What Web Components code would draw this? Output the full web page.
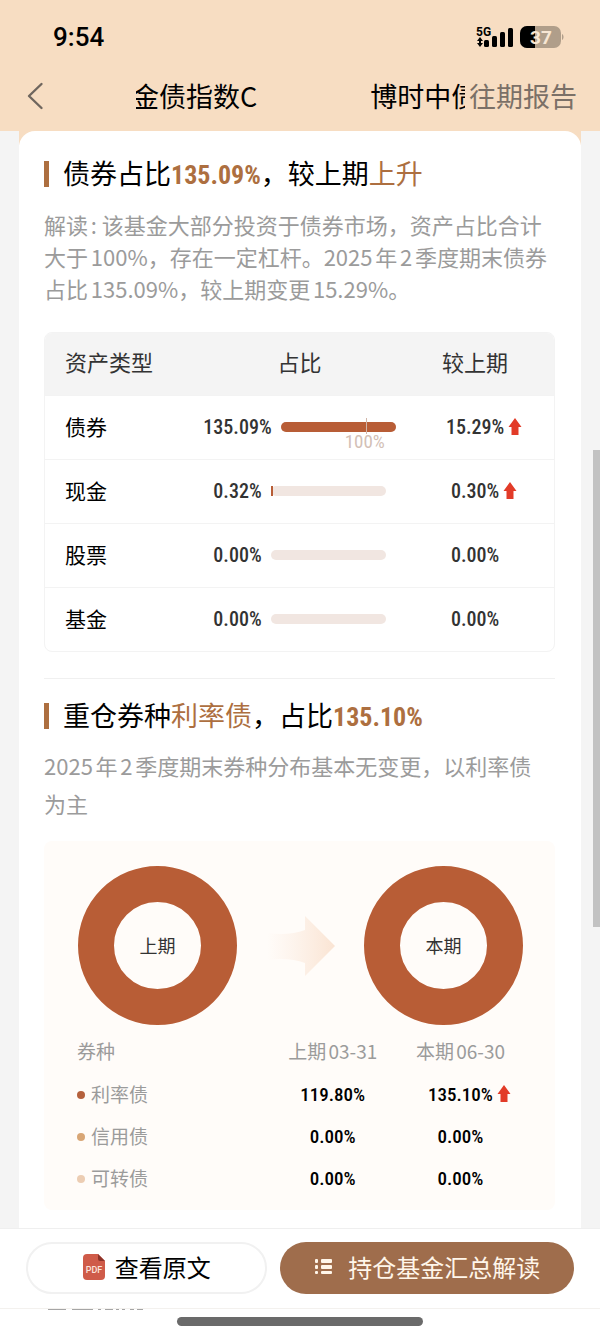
<!DOCTYPE html>
<html lang="zh-CN">
<head>
<meta charset="utf-8">
<meta name="viewport" content="width=device-width, initial-scale=1">
<title>基金报告解读</title>
<style>
:root {
  --peach: #f7ddc2;
  --accent: #ad6f40;
  --fill: #b85d36;
  --muted: #9b9b9b;
  --num: "Roboto Condensed", "Liberation Sans Narrow", Roboto, sans-serif;
}
body {
  margin: 0;
  background: #f4f4f4;
  color: #000;
  font-family: "Noto Sans CJK SC", sans-serif;
}
</style>
</head>
<body>
<report-page>
  <status-bar slot="top" time="9:54" battery="37"></status-bar>
  <nav-bar slot="top">
    <span>金债指数C</span><span>博时中债</span>
    <a slot="action" href="#history">往期报告</a>
  </nav-bar>

  <section-heading>债券占比<b class="num">135.09%</b>，较上期<em>上升</em></section-heading>
  <section-text>解读: 该基金大部分投资于债券市场，资产占比合计大于100%，存在一定杠杆。2025年2季度期末债券占比135.09%，较上期变更15.29%。</section-text>
  <asset-table></asset-table>
  <section-rule></section-rule>
  <section-heading>重仓券种<em>利率债</em>，占比<b class="num">135.10%</b></section-heading>
  <section-text loose>2025年2季度期末券种分布基本无变更，以利率债<span style="white-space:nowrap">为主</span></section-text>
  <bond-panel></bond-panel>

  <bottom-bar slot="bottom"></bottom-bar>
</report-page>

<script>
const define = (name, html, setup) => {
  const template = document.createElement('template');
  template.innerHTML = html;
  customElements.define(name, class extends HTMLElement {
    constructor() {
      super();
      this.attachShadow({ mode: 'open' }).append(template.content.cloneNode(true));
    }
    connectedCallback() { if (setup) setup(this, this.shadowRoot); }
  });
};

define('report-page', `
<style>
  :host { display: flex; flex-direction: column; min-height: 100vh; position: relative; }
  header { background: var(--peach); padding-bottom: 5px; }
  main { flex: 1; margin: 0 19px; background: linear-gradient(var(--peach) 14px, #fff 14px); }
  article { background: #fff; border-radius: 16px 16px 0 0; padding: 26px 26px 16px 25px; }
  .thumb { position: absolute; right: 0; top: 450px; width: 7px; height: 477px; background: #c2c2c2; }
</style>
<header><slot name="top"></slot></header>
<main><article><slot></slot></article></main>
<slot name="bottom"></slot>
<div class="thumb"></div>`);

define('status-bar', `
<style>
  :host { display: flex; justify-content: space-between; align-items: center; height: 48px;
    padding: 13px 36px 0 53px; font: 500 26px/32px Roboto, sans-serif; }
  .icons { display: flex; align-items: center; gap: 6px; }
  svg { display: block; }
</style>
<time></time>
<div class="icons">
  <svg width="38" height="30" viewBox="0 -4 38 30" role="img" aria-label="5G">
    <text x="0" y="10" font-family="Roboto, sans-serif" font-weight="700" font-size="12">5G</text>
    <path d="M4 11l3 4H1zM4 21l3-4H1z"/><path d="M3 15h2v2H3z"/>
    <rect x="8" y="14" width="5" height="7" rx="1.500"/><rect x="16" y="10" width="5" height="11" rx="1.500"/>
    <rect x="24" y="6" width="5" height="15" rx="1.500"/><rect x="32" y="2" width="5" height="19" rx="1.500"/>
  </svg>
  <svg width="44" height="24" viewBox="0 0 44 24" role="img" aria-label="电量">
    <defs><clipPath id="level"><rect width="15" height="24"/></clipPath></defs>
    <rect y="1" width="41" height="22" rx="7" fill="#b09e8a"/>
    <rect y="1" width="41" height="22" rx="7" clip-path="url(#level)"/>
    <path d="M42 9c2 1 2 5 0 6z" fill="#b09e8a"/>
    <text class="pct" x="21" y="19" text-anchor="middle" fill="#f7e6d3" font-family="Roboto, sans-serif" font-weight="700" font-size="19"></text>
  </svg>
</div>`, (host, root) => {
  root.querySelector('time').textContent = host.getAttribute('time');
  root.querySelector('.pct').textContent = host.getAttribute('battery');
});

define('nav-bar', `
<style>
  :host { display: flex; align-items: center; height: 61px; padding: 4px 23px 0 26px; font-size: 27px; line-height: 40px; }
  button { flex: none; width: 20px; height: 30px; margin: 0 90px 0 0; padding: 0; border: 0; background: none; }
  svg { display: block; }
  .marquee { flex: 1; min-width: 0; overflow: hidden; white-space: nowrap; }
  .track { display: flex; gap: 113px; margin-left: -4px; }
  ::slotted(span) { flex: none; }
  ::slotted(a) { flex: none; margin-left: 4px; color: #7b7067; text-decoration: none; }
</style>
<button type="button" aria-label="返回"><svg width="20" height="30" viewBox="0 0 20 30" fill="none" stroke="#6f665e" stroke-width="2.400" stroke-linecap="round" stroke-linejoin="round"><path d="M15.500 3L3 15l12.500 12"/></svg></button>
<div class="marquee"><div class="track"><slot></slot></div></div>
<slot name="action"></slot>`);

define('section-heading', `
<style>
  :host { display: block; }
  h2 { display: flex; align-items: center; height: 34px; margin: 0; font-size: 27px; line-height: 32px; font-weight: 400; }
  h2::before { content: ""; width: 5px; height: 26px; margin-right: 14px; background: var(--accent); }
  h2 > span { padding-bottom: 2px; }
  ::slotted(em) { color: var(--accent); font-style: normal; }
  ::slotted(b) { color: var(--accent); font-family: var(--num); font-size: 26px; line-height: 1; font-weight: 700; }
</style>
<h2><span><slot></slot></span></h2>`);

define('section-text', `
<style>
  :host { display: block; padding: 17px 0 28px; color: var(--muted); font-size: 22px; line-height: 32px; text-autospace: normal; }
  :host([loose]) { padding: 13px 0 19px; line-height: 38px; }
  p { margin: 0; }
</style>
<p><slot></slot></p>`);

define('section-rule', `
<style>:host { display: block; margin: 26px 0 20px; border-top: 1px solid #f0f0f0; }</style>`);

define('up-arrow', `
<style>:host { display: inline-block; } svg { display: block; }</style>
<svg width="14" height="18" viewBox="0 0 14 18" role="img" aria-label="上升"><path d="M7 0l6.500 9H10.500V17H3.500V9H.5z" fill="#e23b28"/></svg>`);

define('ratio-bar', `
<style>
  :host { display: block; position: relative; width: 115px; height: 10px; border-radius: 5px; background: #f1e6e1; }
  .level { height: 100%; background: var(--fill); }
  .level.full { border-radius: 5px; }
  .mark { position: absolute; top: -4px; left: 74%; width: 1px; height: 16px; background: #d0b5a8; }
  .mark span { position: absolute; top: 16px; left: -30px; width: 58px; text-align: center; color: #d3bfb6;
    font: 19px/16px var(--num); }
</style>
<div class="level"></div>`, (host, root) => {
  const value = Number(host.getAttribute('value'));
  const level = root.querySelector('.level');
  level.style.width = value > 0 ? 'max(2px, ' + Math.min(value, 100) + '%)' : '0';
  level.classList.toggle('full', value >= 100);
  if (value > 100) level.insertAdjacentHTML('afterend', '<div class="mark"><span>100%</span></div>');
});

const change = (text, up) => `<span class="change">${text}${up ? '<up-arrow></up-arrow>' : ''}</span>`;

define('asset-table', `
<style>
  :host { display: block; border: 1px solid #f3f3f3; border-radius: 8px; overflow: hidden; }
  table { width: 100%; table-layout: fixed; border-collapse: collapse; }
  th, td { box-sizing: border-box; height: 64px; padding: 0; font-weight: 400; text-align: center; border-top: 1px solid #f3f3f3; }
  thead th { height: 62px; padding-bottom: 5px; border: 0; background: #f4f4f4; color: #333; font-size: 22px; }
  th:first-child { padding-left: 20px; text-align: left; }
  tbody th { padding-bottom: 3px; font-size: 21px; }
  td { color: #333; font: 500 20px/24px var(--num); }
  .share { display: flex; align-items: center; justify-content: center; gap: 9px; }
  .change { position: relative; }
  up-arrow { position: absolute; left: 100%; top: 3px; margin-left: 4px; }
</style>
<table>
  <colgroup><col style="width:31%"><col style="width:38%"><col style="width:31%"></colgroup>
  <thead><tr><th scope="col">资产类型</th><th scope="col">占比</th><th scope="col">较上期</th></tr></thead>
  <tbody></tbody>
</table>`, (host, root) => {
  root.querySelector('tbody').innerHTML = [
    ['债券', '135.09', '15.29%', true],
    ['现金', '0.32', '0.30%', true],
    ['股票', '0.00', '0.00%', false],
    ['基金', '0.00', '0.00%', false],
  ].map(([name, share, diff, up]) => `<tr><th scope="row">${name}</th>
    <td><div class="share"><span>${share}%</span><ratio-bar value="${share}"></ratio-bar></div></td>
    <td>${change(diff, up)}</td></tr>`).join('');
});

define('donut-chart', `
<style>
  :host { display: grid; place-items: center; box-sizing: border-box; width: 159px; height: 159px;
    border: 36px solid var(--fill); border-radius: 50%; color: #333; font-size: 18px; line-height: 24px; }
  span { padding-bottom: 2px; }
</style>
<span><slot></slot></span>`);

define('bond-panel', `
<style>
  :host { display: block; padding: 25px 0 11px; border-radius: 8px; background: #fffcf9; }
  .charts { display: flex; align-items: center; justify-content: space-between; padding: 0 32px 0 34px; }
  .charts svg { display: block; }
  table { width: 100%; margin-top: 4px; table-layout: fixed; border-collapse: collapse; }
  th, td { box-sizing: border-box; height: 42px; padding: 0; font-weight: 400; text-align: center; white-space: nowrap; }
  th { padding-bottom: 1px; color: var(--muted); font-size: 19px; text-autospace: normal; }
  thead th { height: 44px; }
  th:first-child { padding-left: 33px; text-align: left; }
  td { padding-top: 2px; color: #000; font: 500 19px/24px var(--num); }
  i { display: inline-block; width: 8px; height: 8px; margin: 0 6px 3px 0; border-radius: 50%; vertical-align: middle; }
  .change { position: relative; }
  up-arrow { position: absolute; left: 100%; top: 2px; margin-left: 4px; }
</style>
<div class="charts">
  <donut-chart>上期</donut-chart>
  <svg width="68" height="60" viewBox="0 0 68 60" aria-hidden="true">
    <defs><linearGradient id="fade"><stop offset="0" stop-color="#fbe9dc" stop-opacity="0"/><stop offset="1" stop-color="#fae4d3"/></linearGradient></defs>
    <path d="M0 17Q22 20 38 14V0L68 30L38 60V47Q22 41 0 44z" fill="url(#fade)"/>
  </svg>
  <donut-chart>本期</donut-chart>
</div>
<table>
  <colgroup><col style="width:44%"><col style="width:25%"><col style="width:25%"><col></colgroup>
  <thead><tr><th scope="col">券种</th><th scope="col">上期03-31</th><th scope="col">本期06-30</th><td></td></tr></thead>
  <tbody></tbody>
</table>`, (host, root) => {
  root.querySelector('tbody').innerHTML = [
    ['利率债', '#b5613d', '119.80%', '135.10%', true],
    ['信用债', '#d8a676', '0.00%', '0.00%', false],
    ['可转债', '#eccdb3', '0.00%', '0.00%', false],
  ].map(([name, color, before, now, up]) => `<tr><th scope="row"><i style="background:${color}"></i>${name}</th>
    <td>${before}</td><td>${change(now, up)}</td><td></td></tr>`).join('');
});

define('bottom-bar', `
<style>
  :host { display: block; border-top: 1px solid #efefef; background: #fff; }
  .actions { display: grid; grid-template-columns: 241fr 293fr; gap: 13px; padding: 13px 26px 14px; }
  button { display: flex; align-items: center; justify-content: center; height: 52px; box-sizing: border-box;
    margin: 0; padding: 0 0 2px; border: 2px solid #f1f1f1; border-radius: 26px; background: #fff; color: #000;
    font: 24px/36px "Noto Sans CJK SC", sans-serif; gap: 10px; white-space: nowrap; }
  button.primary { gap: 16px; border: 0; background: #9f6d4c; color: #fff6ea; }
  svg { display: block; flex: none; }
  .peek { border-top: 1px solid #f3f1ee; padding-left: 48px; }
  .home { width: 41%; height: 9px; margin: 6px auto 9px; border-radius: 5px; background: #6a6a6a; }
</style>
<div class="actions">
  <button type="button">
    <svg width="22" height="26" viewBox="0 0 22 26" role="img" aria-label="PDF">
      <path d="M4 0H15L22 7V22a4 4 0 0 1-4 4H4a4 4 0 0 1-4-4V4a4 4 0 0 1 4-4z" fill="#cf5b49"/><path d="M15 0l7 7H17a2 2 0 0 1-2-2z" fill="#8d3329"/>
      <text x="11" y="19" text-anchor="middle" fill="#fbe3dc" font-family="Roboto, sans-serif" font-weight="500" font-size="9">PDF</text>
    </svg>查看原文</button>
  <button type="button" class="primary">
    <svg width="18" height="16" viewBox="0 0 18 16" fill="#fff6ea" aria-hidden="true"><rect x="1" width="3" height="4" rx="1"/><rect x="1" y="6" width="3" height="4" rx="1"/><rect x="1" y="12" width="3" height="3" rx="1"/><rect x="7" width="11" height="4" rx="1"/><rect x="7" y="6" width="11" height="4" rx="1"/><rect x="7" y="12" width="11" height="3" rx="1"/></svg>
    持仓基金汇总解读</button>
</div>
<div class="peek"><svg width="96" height="2" viewBox="0 0 96 2" fill="#a5a5a5" aria-hidden="true"><path d="M0 0h18v1H0zM24 0h21v1H24zM50 0h3v1h-3zM57 0h8v1h-8zM68 0h3v1h-3zM74 0h3v1h-3zM82 0h4v1h-4zM89 0h6v1h-6z"/></svg></div>
<div class="home"></div>`);
</script>
</body>
</html>
